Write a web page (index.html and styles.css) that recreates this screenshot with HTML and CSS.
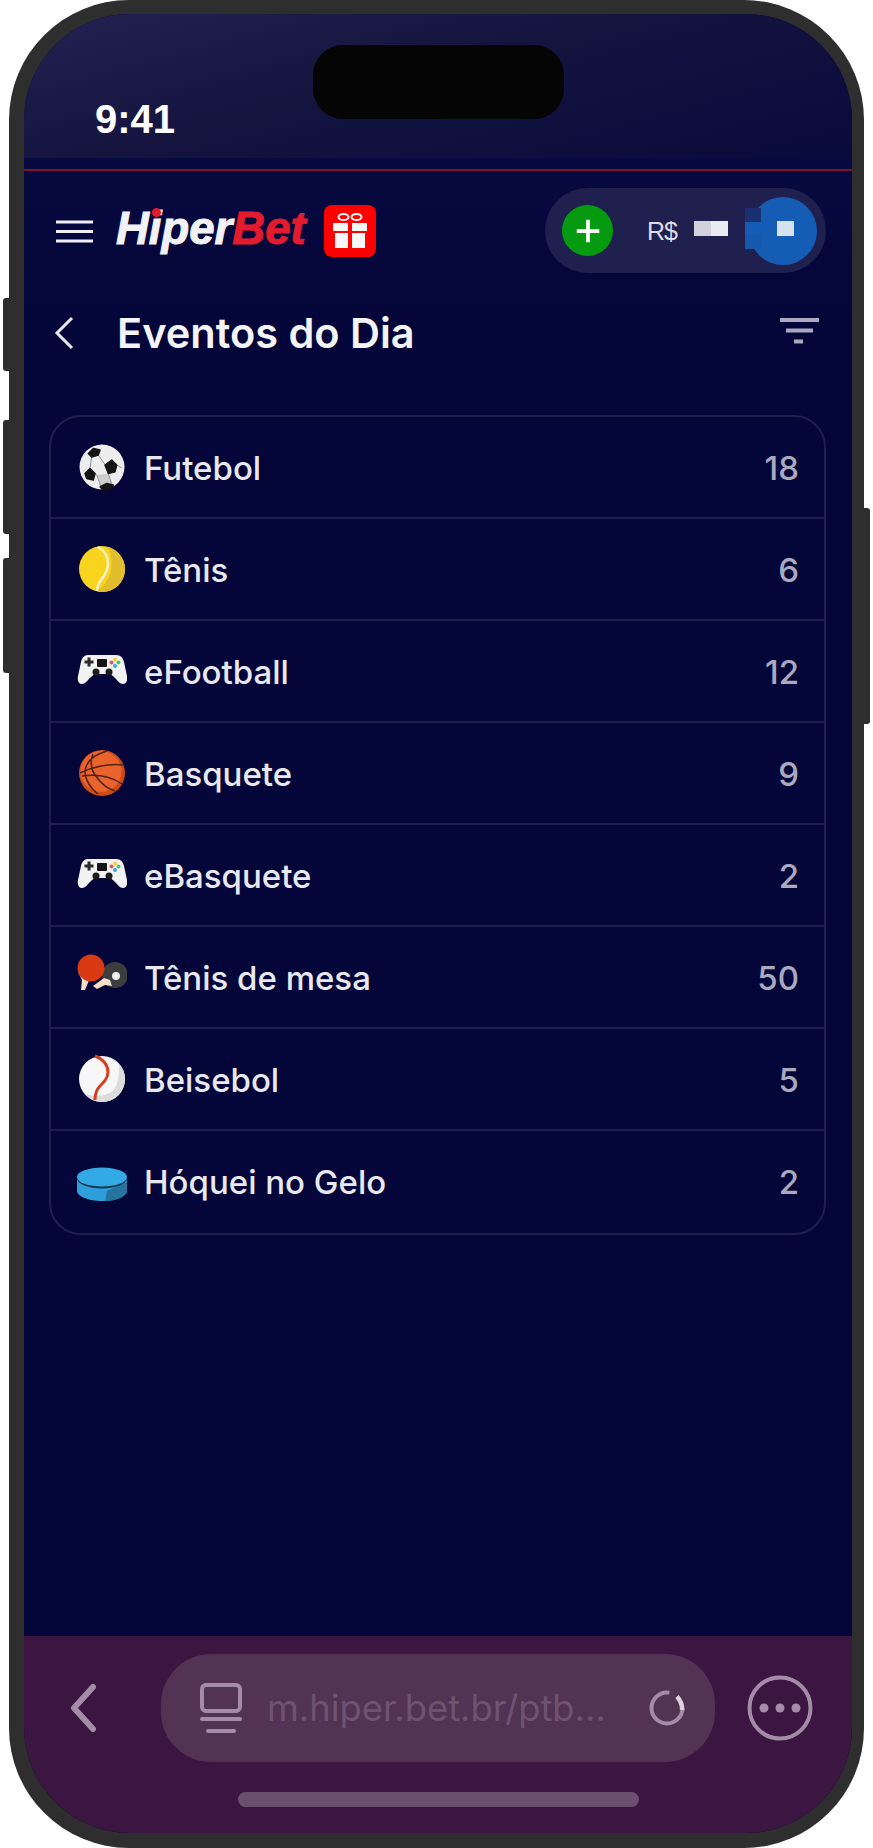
FILE: index.html
```html
<!DOCTYPE html>
<html lang="pt-BR">
<head>
<meta charset="utf-8">
<title>Eventos do Dia</title>
<link rel="stylesheet" href="styles.css">
</head>
<body>
<svg class="defs" width="0" height="0" aria-hidden="true">
  <symbol id="pad" viewBox="0 0 50 50">
    <path fill="#f2f2f2" d="M11 9H39C44 9 46 12 47 16L50 30C51 35 49 38 46 38C43 38 41 35 38 32C36 30 34 28 31 28H20C17 28 15 30 13 32C10 35 8 38 5 38C2 38 0 35 1 30L4 16C5 12 7 9 11 9Z"/>
    <rect x="20" y="13" width="10" height="8" rx="1" fill="#151515"/>
    <path fill="#2a2a2a" d="M10.500 11.500h3v3h3v3h-3v3h-3v-3h-3v-3h3z"/>
    <circle cx="19" cy="26" r="3.500" fill="#1c1c1c"/><circle cx="32" cy="26" r="3.500" fill="#1c1c1c"/>
    <circle cx="38" cy="13.500" r="2" fill="#f4d03f"/><circle cx="41.500" cy="16.500" r="2" fill="#59c36a"/>
    <circle cx="34.500" cy="16.500" r="2" fill="#e8584a"/><circle cx="38" cy="20" r="2" fill="#3fa7e0"/>
  </symbol>
</svg>
<div class="phone">
  <span class="side side-a"></span><span class="side side-b"></span><span class="side side-c"></span><span class="side side-d"></span>
  <div class="screen">
    <span class="island"></span>
    <div class="status"><span class="time">9:41</span></div>
    <div class="page">
      <header class="topbar">
        <div class="brand">
          <svg class="burger" viewBox="0 0 38 24"><path d="M0 3h37M0 12.500h37M0 22h37"/></svg>
          <span class="logo">Hiper<b>Bet</b><i class="logo-dot"></i></span>
          <svg class="gift" viewBox="0 0 52 52">
            <rect width="52" height="52" rx="8" fill="#fe0000"/>
            <g fill="none" stroke="#f6f6f6" stroke-width="2"><ellipse cx="19.500" cy="12" rx="5" ry="3"/><ellipse cx="32.500" cy="12" rx="5" ry="3"/></g>
            <path fill="#f6f6f6" d="M9 18h15v8H9zM28 18h15v8H28zM11 28h13v15H11zM28 28h13v15H28z"/>
          </svg>
        </div>
        <div class="balance">
          <span class="add"><svg viewBox="0 0 24 24"><path d="M12 3v18M3 12h18"/></svg></span>
          <span class="currency">R$</span>
          <span class="mask"><i></i><i></i></span>
          <span class="avatar"><i class="px px-a"></i><i class="px px-b"></i><i class="px px-c"></i><i class="px px-d"></i></span>
        </div>
      </header>
      <div class="titlebar">
        <svg class="back" viewBox="0 0 20 34"><path d="M18 2 3 17l15 15"/></svg>
        <h1>Eventos do Dia</h1>
        <svg class="filter" viewBox="0 0 40 26"><path d="M0 2h39M6 12.500h27M14 23.500h9"/></svg>
      </div>
      <ul class="list">
        <li class="row"><svg class="ico" viewBox="0 0 50 50">
          <circle cx="25" cy="25" r="22.500" fill="#ededed"/>
          <path fill="#cdcdcd" d="M19.700 33 31.300 31.500l3.400 10-10 3.300z"/>
          <path fill="none" stroke="#8f8f8f" stroke-width="1" d="M21.300 13l7 10M14.700 15l-1.700 11.500M18 31.500l1.700 1.500 4 11M31.300 31.500l3.400 10M39.700 23l5 3"/>
          <path fill="#141414" stroke="#141414" stroke-width="1.500" stroke-linejoin="round" d="M11.300 11.500 16.300 6.500 23 8l-1.700 5-6.600 2zM28 23l6.700-5 5 5-1.700 6.800-6.700 1.700zM8 31.500l5-5 5 5-1.700 6.500-6.600-1.500zM23 44.800l6.700-3.300 6.600 1.500-1.600 4.200-8.400 1z"/>
        </svg><span class="name">Futebol</span><span class="count">18</span></li>
        <li class="row"><svg class="ico" viewBox="0 0 50 50">
          <circle cx="25" cy="25" r="23" fill="#f8d41f"/>
          <path fill="#e2bd2c" d="M31 3c9 3 17 11 17 22 0 13-10 23-23 23-2 0-3 0-5-1 9-6 11-12 14-20 1-8 1-16-3-24z"/>
          <path fill="none" stroke="#f7f1cf" stroke-width="2.500" d="M21 3c6 3 10 9 10 17 0 6-3 11-7 16-2 3-4 7-4 11"/>
        </svg><span class="name">Tênis</span><span class="count">6</span></li>
        <li class="row"><svg class="ico"><use href="#pad"/></svg><span class="name">eFootball</span><span class="count">12</span></li>
        <li class="row"><svg class="ico" viewBox="0 0 50 50">
          <circle cx="25" cy="25" r="23" fill="#cf4a17"/>
          <circle cx="24" cy="23.500" r="20.500" fill="#ea632c"/>
          <path fill="none" stroke="#4f2212" stroke-width="1.500" d="M3 25C15 19 32 15 46 17M5 28C20 26 35 29 45 36M30 3C16 7 9 14 8 23C8 32 14 41 21 46M16 6C13 12 14 22 18 27C22 33 28 40 38 43"/>
        </svg><span class="name">Basquete</span><span class="count">9</span></li>
        <li class="row"><svg class="ico"><use href="#pad"/></svg><span class="name">eBasquete</span><span class="count">2</span></li>
        <li class="row"><svg class="ico" viewBox="0 0 50 50">
          <circle cx="38" cy="23" r="13" fill="#3d3d3d"/>
          <circle cx="39" cy="24" r="4" fill="#eee"/>
          <path fill="#f6dfc8" d="M27 26 33 28 35 34 28 33 20 37 16 34zM1 20 13 26 8 38 4 38 5 28z"/>
          <circle cx="14" cy="16" r="13.500" fill="#d93a14"/>
        </svg><span class="name">Tênis de mesa</span><span class="count">50</span></li>
        <li class="row"><svg class="ico" viewBox="0 0 50 50">
          <circle cx="25" cy="25" r="23" fill="#f7f7f7"/>
          <path fill="#dcdcdc" d="M42 10c4 4 6 9 6 15 0 13-10 23-23 23-7 0-13-3-17-8 13 4 26 2 31-8 3-7 3-15 3-22z"/>
          <path fill="none" stroke="#d83b1e" stroke-width="3" d="M18 2c8 3 13 9 13 16 0 6-4 10-8 14-3 3-5 7-5 14"/>
        </svg><span class="name">Beisebol</span><span class="count">5</span></li>
        <li class="row"><svg class="ico" viewBox="0 0 50 50">
          <path fill="#2f9fdc" d="M0 22v13c0 5 11 10 25 10s25-5 25-10V22z"/>
          <path fill="#24749f" d="M28 45c12 0 22-5 22-10V26L30 35z"/>
          <ellipse cx="25" cy="22.500" rx="25" ry="10" fill="#12384f"/>
          <ellipse cx="25" cy="21" rx="25" ry="9.500" fill="#33a9e6"/>
        </svg><span class="name">Hóquei no Gelo</span><span class="count">2</span></li>
      </ul>
    </div>
    <footer class="browser">
      <div class="nav">
        <svg class="nav-back" viewBox="0 0 28 50"><path d="M24 4 5 25l19 21"/></svg>
        <div class="url">
          <svg class="site" viewBox="0 0 42 50"><rect x="2" y="2" width="38" height="26" rx="4"/><path d="M2 36h38M8 48h26" /></svg>
          <span class="addr">m.hiper.bet.br/ptb…</span>
          <svg class="spin" viewBox="0 0 36 36"><circle cx="18" cy="18" r="15.500"/><path class="spin-tip" d="M28 6.500C31 10 33.500 15 33 20"/></svg>
        </div>
        <svg class="more" viewBox="0 0 66 66"><circle class="more-ring" cx="33" cy="33" r="30.500"/><circle cx="17" cy="33" r="4.500"/><circle cx="33" cy="33" r="4.500"/><circle cx="49" cy="33" r="4.500"/></svg>
      </div>
      <span class="home"></span>
    </footer>
  </div>
</div>
</body>
</html>
```
FILE: styles.css
```css
* { box-sizing: border-box; }
html, body { margin: 0; padding: 0; background: #fff; }
body { width: 873px; height: 1848px; overflow: hidden; font-family: Inter, "Liberation Sans", sans-serif; }
.defs { position: absolute; }

.phone {
  position: relative;
  width: 855px;
  height: 1848px;
  margin-left: 9px;
  padding: 14px 12px 15px 15px;
  background: #2e2e2e;
  border-radius: 120px;
}
.side { position: absolute; background: #2e2e2e; border-radius: 3px 0 0 3px; width: 7px; left: -6px; }
.side-a { top: 298px; height: 73px; }
.side-b { top: 420px; height: 114px; }
.side-c { top: 558px; height: 115px; }
.side-d { top: 508px; height: 216px; left: auto; right: -6px; border-radius: 0 3px 3px 0; }

.screen {
  position: relative;
  display: flex;
  flex-direction: column;
  height: 100%;
  overflow: hidden;
  border-radius: 106px;
  background: #040538;
}
.island { position: absolute; top: 31px; left: 289px; width: 251px; height: 74px; border-radius: 30px; background: #050505; }

.status {
  height: 144px;
  flex: none;
  padding: 82px 0 0 71px;
  background: linear-gradient(165deg, #232251 0%, #14143f 45%, #080a3c 100%);
}
.time { display: block; color: #fff; font: 700 40px/46px "Liberation Sans", sans-serif; }

.page { flex: 1; min-height: 0; padding-top: 11px; background: linear-gradient(180deg, #070a40 0, #040538 170px); }
.topbar {
  position: relative;
  display: flex;
  align-items: center;
  justify-content: space-between;
  height: 85px;
  margin-top: 19px;
  padding: 0 26px 0 32px;
}
.topbar::before { content: ""; position: absolute; left: 0; right: 0; top: -19px; height: 2px; background: #7e1327; }
.brand { display: flex; align-items: center; }
.burger { width: 38px; height: 24px; flex: none; }
.burger path { stroke: #eeeef4; stroke-width: 3; fill: none; }
.logo {
  position: relative;
  margin: -3px 0 0 22px;
  color: #f2f2f5;
  font: italic 700 45.500px/50px "Liberation Sans", sans-serif;
  -webkit-text-stroke: 1px currentColor;
}
.logo b { color: #e31c2d; font-weight: 700; }
.logo-dot { position: absolute; left: 36px; top: 4px; width: 9px; height: 9px; border-radius: 50%; background: #e31c2d; }
.gift { width: 52px; height: 52px; margin-left: 18px; flex: none; }

.balance {
  position: relative;
  display: flex;
  align-items: center;
  width: 281px;
  height: 85px;
  padding-left: 17px;
  border-radius: 43px;
  background: #20204e;
}
.add { display: flex; align-items: center; justify-content: center; width: 51px; height: 51px; border-radius: 50%; background: #069a10; }
.add svg { width: 30px; height: 30px; fill: none; stroke: #fff; stroke-width: 3; }
.currency { margin-left: 34px; color: #dcdce6; font: 400 25px/28px "Liberation Sans", sans-serif; letter-spacing: -1px; }
.mask { display: flex; margin-left: 17px; margin-top: -4px; }
.mask i { width: 17px; height: 15px; background: #d2d2dc; }
.mask i + i { background: #ebebf2; }
.avatar { position: absolute; right: 9px; top: 9px; width: 68px; height: 68px; border-radius: 50%; background: #155cb4; }
.px { position: absolute; display: block; width: 16px; height: 14px; left: -4px; }
.px-a { top: 11px; background: #1a3070; }
.px-b { top: 25px; background: #155cb4; }
.px-c { top: 38px; background: #1558ac; }
.px-d { left: 28px; top: 24px; width: 17px; height: 15px; background: #d5e2f2; }

.titlebar { display: flex; align-items: center; height: 92px; margin-top: 14px; padding: 0 32px 0 30px; }
.back { width: 20px; height: 34px; flex: none; }
.back path { fill: none; stroke: #e8e8ef; stroke-width: 3; }
h1 { flex: 1; margin: 0 0 0 43px; color: #f4f4f7; font: 600 41.500px/48px Inter, sans-serif; }
.filter { width: 40px; height: 26px; flex: none; margin-top: -4px; }
.filter path { fill: none; stroke: #a9a9c0; stroke-width: 4; }

.list {
  list-style: none;
  margin: 36px 26px 0 25px;
  padding: 0;
  border: 2px solid #20204e;
  border-radius: 32px;
}
.row { display: flex; align-items: center; height: 102px; padding: 0 25px 0 26px; }
.row + .row { border-top: 2px solid #20204e; }
.row:first-child { height: 100px; }
.row:last-child { height: 104px; padding-bottom: 2px; }
.ico { width: 50px; height: 50px; flex: none; }
.name { flex: 1; margin: 2px 0 0 17px; color: #e8e9f0; font: 500 33px/40px Inter, sans-serif; }
.count { margin-top: 2px; color: #a9a9bf; font: 500 33px/40px Inter, sans-serif; }

.browser { flex: none; height: 197px; background: #3b1640; }
.nav { display: flex; align-items: center; height: 108px; margin-top: 18px; padding-left: 45px; }
.nav-back { width: 28px; height: 50px; flex: none; }
.nav-back path { fill: none; stroke: #a48ca8; stroke-width: 6; stroke-linecap: round; stroke-linejoin: round; }
.url { display: flex; align-items: center; width: 554px; height: 108px; margin-left: 64px; padding-left: 39px; border-radius: 50px; background: #523353; }
.site { width: 42px; height: 50px; flex: none; }
.site rect, .site path { fill: none; stroke: #a48ca8; stroke-width: 4; stroke-linecap: round; }
.addr { flex: 1; margin-left: 25px; color: #6e5272; font: 400 36.300px/44px Inter, sans-serif; white-space: nowrap; }
.spin { width: 36px; height: 36px; flex: none; margin-right: 30px; }
.spin circle { fill: none; stroke: #a48ca8; stroke-width: 4; stroke-dasharray: 75 22; }
.spin .spin-tip { fill: none; stroke: #dcd3de; stroke-width: 4.500; }
.more { width: 66px; height: 66px; margin-left: 32px; flex: none; fill: #a48ca8; }
.more-ring { fill: none; stroke: #a48ca8; stroke-width: 4; }
.home { display: block; width: 401px; height: 15px; margin: 30px 0 0 214px; border-radius: 8px; background: #6b4f6f; }
```
